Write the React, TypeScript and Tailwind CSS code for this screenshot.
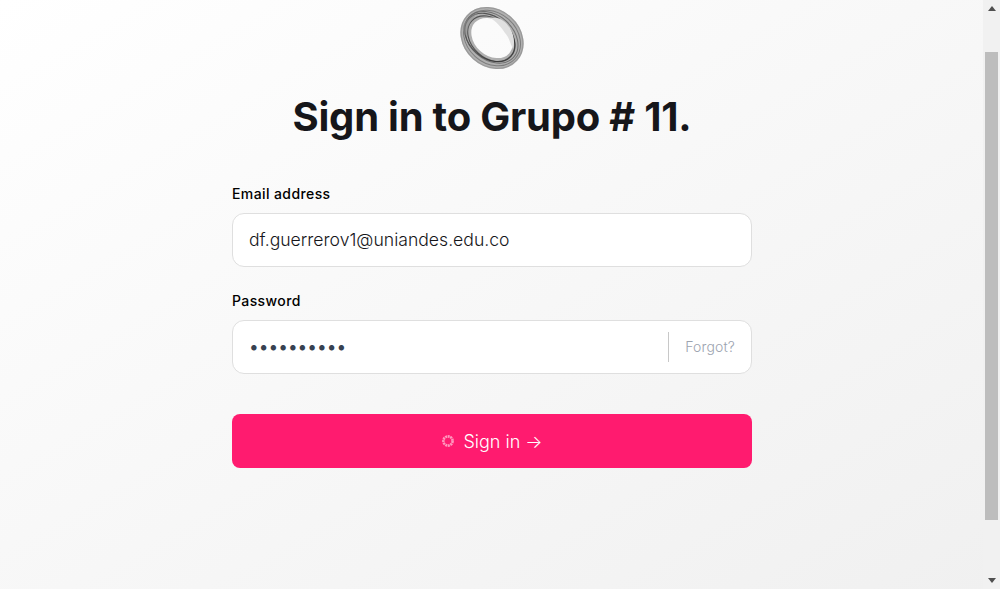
import React from "react";

const Logo = () => (
  <svg width="66" height="62" viewBox="0 0 66 62" fill="none" className="block overflow-visible">
    <g transform="rotate(42 33 31)">
      <ellipse cx="33" cy="31" rx="28.5" ry="23" stroke="#b0b0b0" strokeWidth="11" />
      <ellipse cx="33" cy="31" rx="33.2" ry="27.8" stroke="#8a8a8a" strokeWidth="1.2" strokeOpacity="0.6" />
      <ellipse cx="31" cy="32" rx="28" ry="20.5" stroke="#3f3f3f" strokeWidth="1.1" strokeOpacity="0.8" />
      <ellipse cx="33" cy="32" rx="26.5" ry="19.5" stroke="#333" strokeWidth="1.1" strokeOpacity="0.75" />
      <ellipse cx="32" cy="31" rx="30" ry="22" stroke="#555" strokeWidth="1" strokeOpacity="0.7" />
      <ellipse cx="33" cy="31" rx="31" ry="25" stroke="#666" strokeWidth="1" strokeOpacity="0.7" />
    </g>
    <path d="M31 11 C38 9 46 13 51 21 C55 28 56 35 54 42 C51 36 50 30 46 26 C42 20 37 14 31 11Z" fill="#e0e0e0" />
    <path d="M4 19 C7 12 13 8 19 6 C12 12 8 20 8 30 C5 26 3 23 4 19Z" fill="#8f8f8f" fillOpacity="0.55" />
  </svg>
);

const Spinner = () => (
  <svg width="14" height="14" viewBox="0 0 14 14" className="block">
    <circle cx="7" cy="7" r="4.6" stroke="#ffffff" strokeOpacity="0.55" strokeWidth="2.6" strokeDasharray="2 0.6" fill="none" />
  </svg>
);

const Scrollbar = () => (
  <aside className="flex h-full w-[17px] shrink-0 flex-col bg-[#f1f1f1]">
    <div className="flex h-[17px] items-center justify-center">
      <svg width="8" height="5" viewBox="0 0 8 5"><path d="M4 0 8 5H0Z" fill="#505050" /></svg>
    </div>
    <div className="flex-1 px-[2px] pt-[35px]">
      <div className="h-[468px] bg-[#bdbdbd]" />
    </div>
    <div className="flex h-[17px] items-center justify-center">
      <svg width="8" height="5" viewBox="0 0 8 5"><path d="M0 0H8L4 5Z" fill="#505050" /></svg>
    </div>
  </aside>
);

export default function App() {
  return (
    <div className="flex h-[589px] overflow-hidden bg-gradient-to-br from-white to-[#f0f0f0] font-['Inter',sans-serif] text-[#16161a]">
      <main className="flex-1 pt-[7px] pl-[232px]">
        <div className="flex w-[520px] flex-col">
          <div className="flex justify-center">
            <Logo />
          </div>
          <h1 className="mt-6 text-center text-[40px] leading-[48px] font-bold tracking-[-0.22px] whitespace-nowrap">
            Sign in to Grupo # 11.
          </h1>

          <label className="mt-[43px] block text-sm leading-5 font-medium tracking-[0.4px] text-black">Email address</label>
          <input
            readOnly
            value="df.guerrerov1@uniandes.edu.co"
            className="mt-[9px] h-[54px] w-full rounded-xl border border-[#dfdfdf] bg-white px-4 pb-[2px] text-[17.6px] font-light text-[#16161a] outline-none"
          />

          <label className="mt-6 block text-sm leading-5 font-medium tracking-[0.4px] text-black">Password</label>
          <div className="mt-[9px] flex h-[54px] w-full items-center rounded-xl border border-[#dfdfdf] bg-white px-4">
            <input
              readOnly
              type="password"
              value="1234567890"
              className="min-w-0 flex-1 bg-transparent text-[17.3px] text-[#374151] outline-none"
            />
            <span className="flex h-[30px] items-center border-l border-[#c8c8c8] pl-4 text-sm font-light tracking-[0.15px] text-[#9ca3af]">
              Forgot?
            </span>
          </div>

          <button className="mt-10 flex h-[54px] w-full items-center justify-center gap-2 rounded-lg bg-[#ff1b6f] text-[18px] font-light text-white">
            <Spinner />
            <span>Sign in →</span>
          </button>
        </div>
      </main>
      <Scrollbar />
    </div>
  );
}
